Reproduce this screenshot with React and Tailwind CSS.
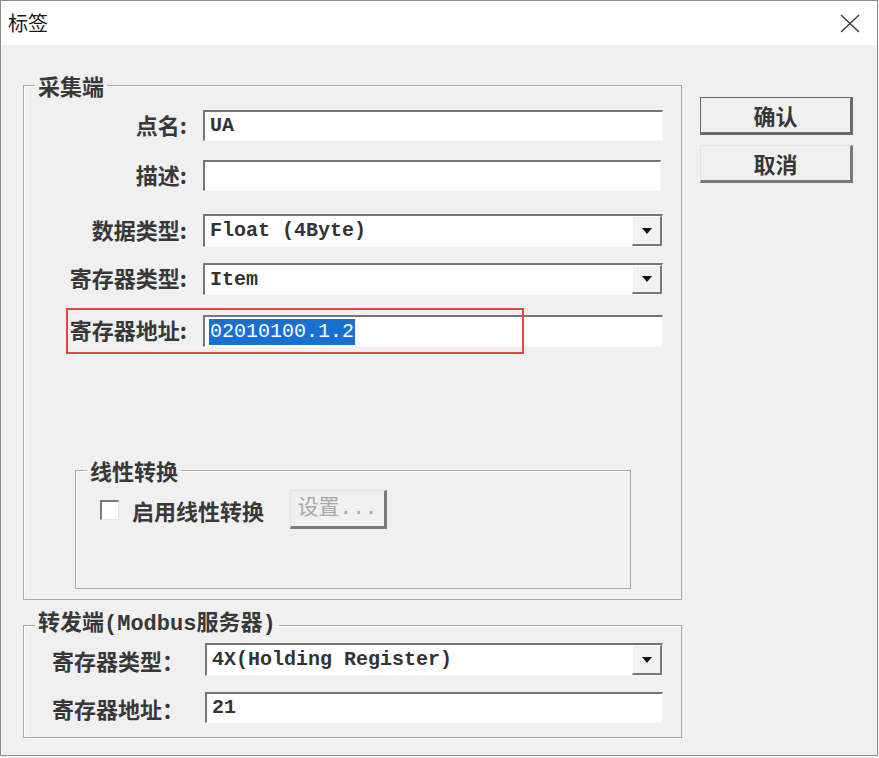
import React from "react";

const CJK = "font-['Noto_Sans_CJK_SC',sans-serif]";
const MONO = "font-['Liberation_Mono','Noto_Sans_CJK_SC',monospace]";

function Sunken({ className = "", children }) {
  return (
    <div
      className={`flex items-center bg-white border-t-2 border-l-2 border-t-[#767676] border-l-[#767676] border-b border-r border-b-[#f7f7f7] border-r-[#f7f7f7] ${className}`}
    >
      {children}
    </div>
  );
}

function Combo({ value, className = "" }) {
  return (
    <Sunken className={`justify-between ${className}`}>
      <span className={`${MONO} font-bold text-[20px] leading-none text-[#333] pl-[5px]`}>{value}</span>
      <div className="h-full w-[30px] bg-[#f2f2f2] border-t border-l border-white border-r-2 border-b-2 border-r-[#777] border-b-[#777] flex items-center justify-center">
        <svg width="10" height="6" viewBox="0 0 10 6">
          <path d="M0 0 L10 0 L5 6 Z" fill="#111" />
        </svg>
      </div>
    </Sunken>
  );
}

function Row({ label, children, mt = "" }) {
  return (
    <div className={`flex items-center ${mt}`}>
      <div className={`w-[163px] text-right ${CJK} font-bold text-[22px] leading-none text-[#383838] -translate-y-[2px]`}>
        {label}
      </div>
      <div className="ml-[16px]">{children}</div>
    </div>
  );
}

function WinButton({ children, def = false, disabled = false, className = "" }) {
  const border = def
    ? "border-t border-l border-[#6a6a6a] border-r-[3px] border-b-[3px] border-r-[#6a6a6a] border-b-[#6a6a6a]"
    : "border-t border-l border-t-[#e2e2e2] border-l-[#e2e2e2] border-r-[3px] border-b-[3px] border-r-[#7a7a7a] border-b-[#7a7a7a]";
  return (
    <div
      className={`flex items-center justify-center bg-[#f0f0f0] ${border} ${className} ${
        disabled ? "text-[#a8a8a8]" : "text-[#383838]"
      }`}
    >
      {children}
    </div>
  );
}

export default function App() {
  return (
    <div className="w-[879px] h-[758px] bg-[#f3f3f3]">
      <div className="w-[878px] h-[756px] border border-[#8c8c8c] bg-[#f0f0f0] flex flex-col">
        {/* Title bar */}
        <div className="h-[44px] bg-white flex items-center justify-between pl-[7px] pr-[17px]">
          <span className={`${CJK} text-[20px] leading-none text-[#1a1a1a]`}>标签</span>
          <svg width="20" height="19" viewBox="0 0 20 19">
            <path d="M1 1 L19 18 M19 1 L1 18" stroke="#333" strokeWidth="1.3" fill="none" />
          </svg>
        </div>

        {/* Body */}
        <div className="flex pl-[22px]">
          {/* Left column */}
          <div className="flex flex-col w-[659px] pt-[28px]">
            {/* 采集端 */}
            <fieldset className="border border-[#a8a8a8] shadow-[inset_1px_1px_0_#ffffff] h-[527px] w-[659px]">
              <legend className={`ml-[11px] px-[3px] ${CJK} font-bold text-[22px] leading-[24px] text-[#383838]`}>
                采集端
              </legend>

              <Row label="点名:" mt="mt-[13px]">
                <Sunken className="w-[460px] h-[31px]">
                  <span className={`${MONO} font-bold text-[20px] leading-none text-[#333] pl-[5px]`}>UA</span>
                </Sunken>
              </Row>

              <Row label="描述:" mt="mt-[19px]">
                <Sunken className="w-[458px] h-[31px]" />
              </Row>

              <Row label="数据类型:" mt="mt-[23px]">
                <Combo value="Float (4Byte)" className="w-[460px] h-[33px]" />
              </Row>

              <Row label="寄存器类型:" mt="mt-[16px]">
                <Combo value="Item" className="w-[460px] h-[32px]" />
              </Row>

              <div className="relative mt-[20px]">
                <Row label="寄存器地址:">
                  <Sunken className="w-[460px] h-[32px]">
                    <span
                      className={`ml-[4px] ${MONO} text-[20px] leading-[26px] bg-[#1a6fd3] text-white px-[1px]`}
                    >
                      02010100.1.2
                    </span>
                  </Sunken>
                </Row>
                <div className="absolute left-[42px] top-[-7px] w-[458px] h-[46px] border-2 border-[#e04848] pointer-events-none" />
              </div>

              {/* 线性转换 */}
              <fieldset className="ml-[51px] mt-[111px] w-[556px] h-[131px] border border-[#a8a8a8] shadow-[inset_1px_1px_0_#ffffff]">
                <legend className={`ml-[11px] px-[3px] ${CJK} font-bold text-[22px] leading-[24px] text-[#383838]`}>
                  线性转换
                </legend>
                <div className="flex items-center mt-[8px] pl-[24px]">
                  <div className="w-[19px] h-[20px] bg-white border-t-2 border-l-2 border-t-[#7a7a7a] border-l-[#7a7a7a] border-b border-r border-[#e8e8e8]" />
                  <span className={`ml-[13px] ${CJK} font-bold text-[22px] leading-none text-[#383838]`}>
                    启用线性转换
                  </span>
                  <WinButton disabled className="ml-[26px] w-[97px] h-[39px]">
                    <span className={`${MONO} text-[21px] leading-none`}>设置...</span>
                  </WinButton>
                </div>
              </fieldset>
            </fieldset>

            {/* 转发端 */}
            <fieldset className="mt-[13px] h-[125px] w-[659px] border border-[#a8a8a8] shadow-[inset_1px_1px_0_#ffffff]">
              <legend className={`ml-[11px] px-[3px] ${MONO} font-bold text-[22px] leading-[24px] text-[#383838]`}>
                转发端(Modbus服务器)
              </legend>
              <div className="flex items-center mt-[6px] pl-[28px]">
                <div className={`w-[153px] ${CJK} font-bold text-[22px] leading-none text-[#383838]`}>寄存器类型：</div>
                <Combo value="4X(Holding Register)" className="w-[458px] h-[33px]" />
              </div>
              <div className="flex items-center mt-[16px] pl-[28px]">
                <div className={`w-[153px] ${CJK} font-bold text-[22px] leading-none text-[#383838]`}>寄存器地址：</div>
                <Sunken className="w-[458px] h-[31px]">
                  <span className={`${MONO} font-bold text-[20px] leading-none text-[#333] pl-[5px]`}>21</span>
                </Sunken>
              </div>
            </fieldset>
          </div>

          {/* Right column */}
          <div className="flex flex-col ml-[18px] pt-[52px] gap-[10px]">
            <WinButton def className="w-[153px] h-[38px]">
              <span className={`${CJK} font-bold text-[22px] leading-none`}>确认</span>
            </WinButton>
            <WinButton className="w-[153px] h-[38px]">
              <span className={`${CJK} font-bold text-[22px] leading-none`}>取消</span>
            </WinButton>
          </div>
        </div>
      </div>
    </div>
  );
}
